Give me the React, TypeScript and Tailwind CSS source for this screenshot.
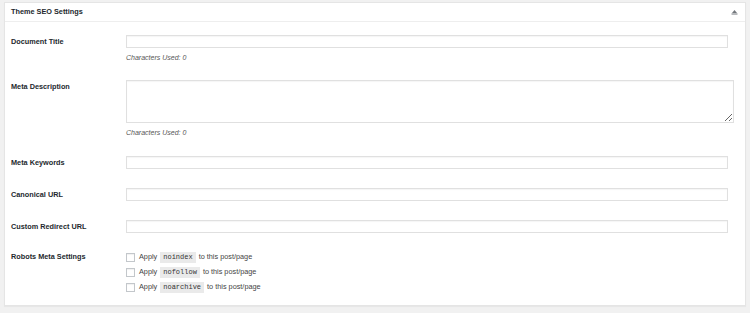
import React from 'react'

const labelCls = 'w-[115px] shrink-0 pt-[1px] text-[7.3px] leading-[12px] font-bold text-[#23282d]'
const inputCls = 'block h-[13px] w-[602px] border border-[#e0e0e0] bg-white shadow-[inset_0_1px_1px_rgba(0,0,0,0.04)] outline-none'
const noteCls = 'mt-[5px] text-[7px] leading-[10px] italic text-[#555555]'

const Robot = ({ tag }: { tag: string }) => (
  <label className="flex h-[15px] items-center text-[7.3px] text-[#444]">
    <span className="mr-[4px] block h-[9px] w-[9px] border border-[#c3c7cb] bg-white shadow-[inset_0_1px_1px_rgba(0,0,0,0.06)]" />
    <span>Apply</span>
    <code className="mx-[3px] bg-[#eaeaea] px-[3px] py-[1px] font-['Liberation_Mono',monospace] text-[7px] leading-[9px] text-[#333]">
      {tag}
    </code>
    <span>to this post/page</span>
  </label>
)

export default function App() {
  return (
    <div className="h-[313px] w-[750px] bg-[#f1f1f1] px-[4px] pt-[2px] font-['Liberation_Sans',Arial,sans-serif]">
      <div className="h-[304px] border border-[#e5e5e5] bg-white shadow-[0_1px_1px_rgba(0,0,0,0.04)]">
        <div className="flex h-[19px] items-center justify-between border-b border-[#eeeeee] pl-[6px] pr-[7px]">
          <span className="text-[7.3px] font-bold text-[#23282d]">Theme SEO Settings</span>
          <svg width="7" height="6" viewBox="0 0 7 6">
            <path d="M1 4 L3.5 1 L6 4 Z" fill="#72777c" />
            <rect x="0.5" y="4.5" width="6" height="1" fill="#72777c" />
          </svg>
        </div>

        <div className="pl-[6px] pr-[17px]">
          <div className="flex pt-[13px]">
            <div className={labelCls}>Document Title</div>
            <div>
              <input className={inputCls} />
              <p className={noteCls}>Characters Used: 0</p>
            </div>
          </div>

          <div className="mt-[17px] flex">
            <div className={labelCls}>Meta Description</div>
            <div>
              <textarea className="block h-[43px] w-[608px] resize border border-[#e0e0e0] bg-white shadow-[inset_0_1px_1px_rgba(0,0,0,0.04)] outline-none" />
              <p className={noteCls}>Characters Used: 0</p>
            </div>
          </div>

          <div className="mt-[18px] flex">
            <div className={labelCls}>Meta Keywords</div>
            <input className={inputCls} />
          </div>

          <div className="mt-[19px] flex">
            <div className={labelCls}>Canonical URL</div>
            <input className={inputCls} />
          </div>

          <div className="mt-[19px] flex">
            <div className={labelCls}>Custom Redirect URL</div>
            <input className={inputCls} />
          </div>

          <div className="mt-[17px] flex">
            <div className={labelCls}>Robots Meta Settings</div>
            <div className="flex flex-col">
              <Robot tag="noindex" />
              <Robot tag="nofollow" />
              <Robot tag="noarchive" />
            </div>
          </div>
        </div>
      </div>
    </div>
  )
}
